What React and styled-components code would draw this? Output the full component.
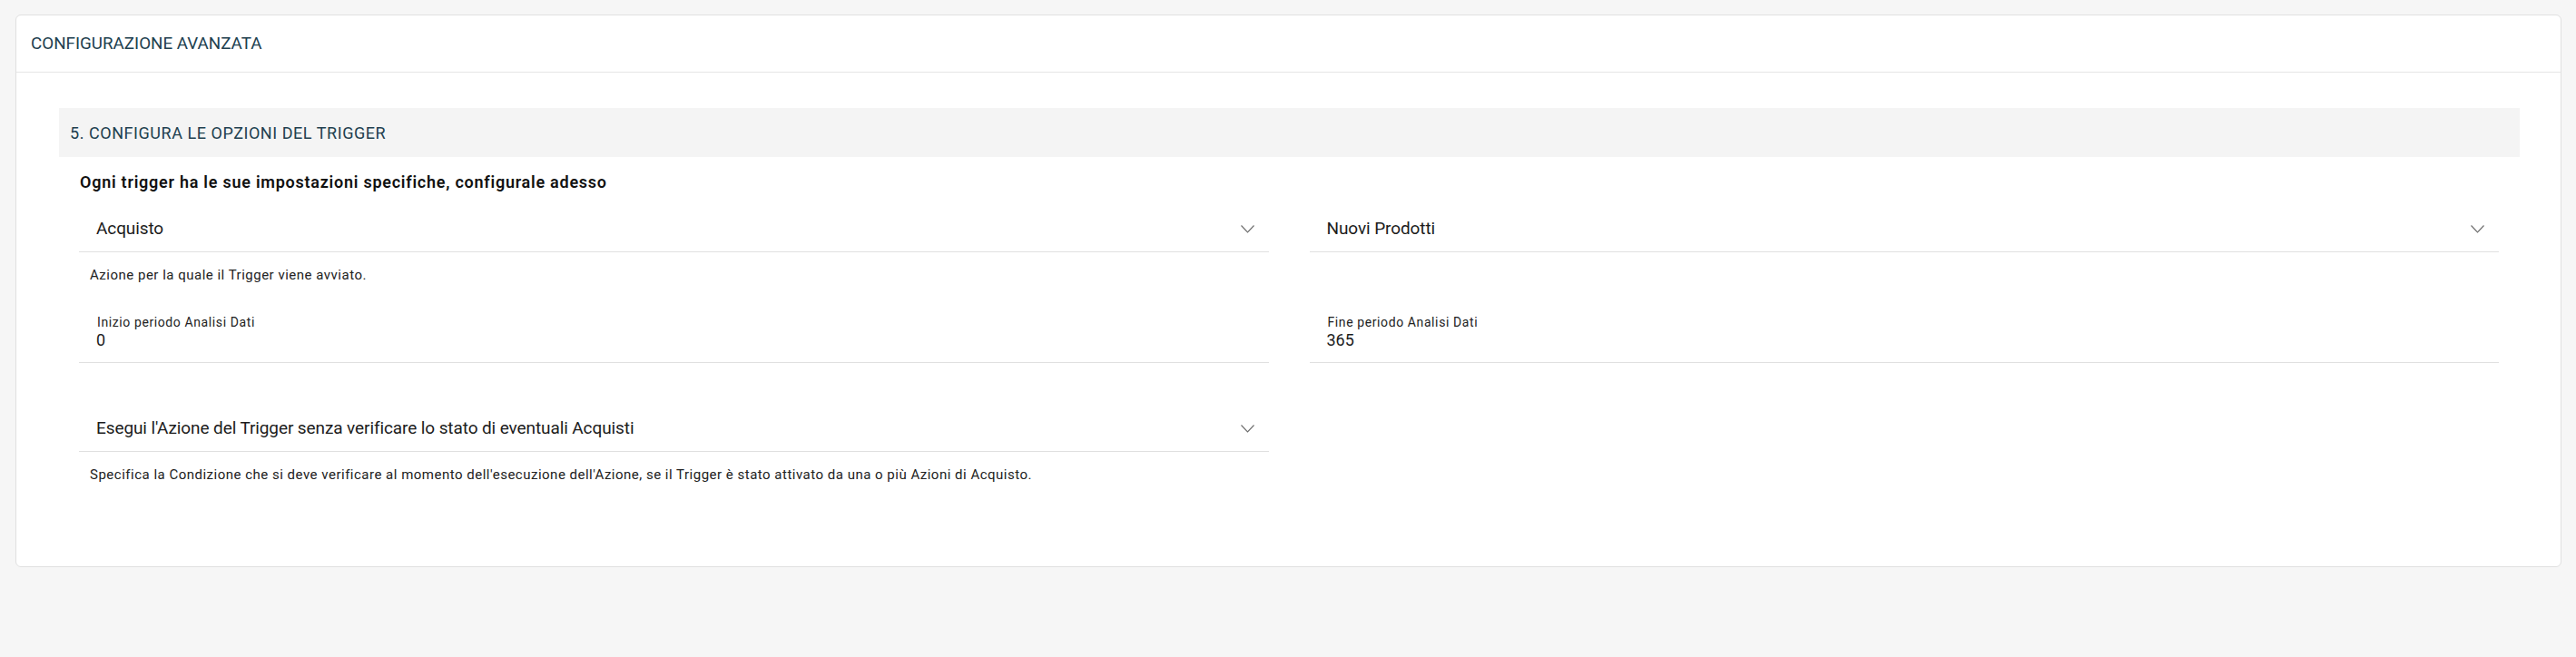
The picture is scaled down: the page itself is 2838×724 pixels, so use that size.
import React from "react";
import styled, { createGlobalStyle } from "styled-components";

const GlobalStyle = createGlobalStyle`
  html, body {
    margin: 0;
    padding: 0;
    background: #f6f6f6;
    font-family: Roboto, "Liberation Sans", Arial, sans-serif;
    color: #1c1c1c;
  }
  * { box-sizing: border-box; }
`;

const Page = styled.div`
  padding: 16px 16px 0 17px;
  min-height: 724px;
`;

const Card = styled.section`
  background: #ffffff;
  border: 1px solid #e0e0e0;
  border-radius: 6px;
`;

const CardHeader = styled.header`
  height: 63px;
  display: flex;
  align-items: center;
  padding: 0 16px;
  border-bottom: 1px solid #e6e6e6;
  font-size: 18.8px;
  letter-spacing: 0;
  text-transform: uppercase;
  color: #21404f;
`;

const CardBody = styled.div`
  padding: 39px 45px 91px 47px;
`;

const SectionBand = styled.div`
  height: 54px;
  display: flex;
  align-items: center;
  padding-left: 12px;
  background: #f4f4f4;
  font-size: 18px;
  letter-spacing: 0.55px;
  text-transform: uppercase;
  color: #21404f;
`;

const Content = styled.div`
  padding: 0 23px 0 22px;
`;

const Intro = styled.p`
  margin: 16px 0 0 1px;
  font-size: 18px;
  line-height: 24px;
  font-weight: 600;
  letter-spacing: 0.75px;
  color: #111;
`;

const Grid = styled.div`
  margin-top: 17px;
  display: grid;
  grid-template-columns: 1fr 1fr;
  column-gap: 45px;
  row-gap: 33px;
  align-items: start;
`;

const Field = styled.div`
  display: flex;
  flex-direction: column;
  margin-top: ${(p) => p.$offset || 0}px;
`;

const SelectBox = styled.div`
  height: 48px;
  display: flex;
  align-items: center;
  justify-content: space-between;
  padding: 10px 16px 13px 19px;
  border-bottom: 1px solid #e0e0e0;
  font-size: 19px;
  line-height: 24px;
  letter-spacing: -0.1px;
  color: #1c1c1c;
  cursor: pointer;
`;

const Helper = styled.div`
  margin-top: 15px;
  padding-left: 12px;
  font-size: 15px;
  line-height: 20px;
  letter-spacing: 0.5px;
  color: #222;
`;

const InputBox = styled.div`
  display: flex;
  flex-direction: column;
  padding: 0 16px 13px 19px;
  border-bottom: 1px solid #e0e0e0;
`;

const InputLabel = styled.label`
  padding-left: 1px;
  font-size: 14px;
  line-height: 18px;
  letter-spacing: 0.6px;
  color: #222;
`;

const InputValue = styled.div`
  font-size: 18px;
  line-height: 22px;
  color: #1c1c1c;
`;

const Chevron = () => (
  <svg width="15" height="9" viewBox="0 0 15 9" fill="none">
    <polyline points="0.5,0.5 7.5,8 14.5,0.5" stroke="#6b6b6b" strokeWidth="1.1" />
  </svg>
);

const Select = ({ value }) => (
  <SelectBox>
    <span>{value}</span>
    <Chevron />
  </SelectBox>
);

const Input = ({ label, value }) => (
  <InputBox>
    <InputLabel>{label}</InputLabel>
    <InputValue>{value}</InputValue>
  </InputBox>
);

export default function App() {
  return (
    <>
      <GlobalStyle />
      <Page>
        <Card>
          <CardHeader>Configurazione avanzata</CardHeader>
          <CardBody>
            <SectionBand>5. Configura le opzioni del trigger</SectionBand>
            <Content>
              <Intro>Ogni trigger ha le sue impostazioni specifiche, configurale adesso</Intro>
              <Grid>
                <Field>
                  <Select value="Acquisto" />
                  <Helper>Azione per la quale il Trigger viene avviato.</Helper>
                </Field>
                <Field>
                  <Select value="Nuovi Prodotti" />
                </Field>
                <Field>
                  <Input label="Inizio periodo Analisi Dati" value="0" />
                </Field>
                <Field>
                  <Input label="Fine periodo Analisi Dati" value="365" />
                </Field>
                <Field $offset={17}>
                  <Select value="Esegui l'Azione del Trigger senza verificare lo stato di eventuali Acquisti" />
                  <Helper>
                    Specifica la Condizione che si deve verificare al momento dell'esecuzione dell'Azione, se il Trigger è stato attivato da una o più Azioni di Acquisto.
                  </Helper>
                </Field>
              </Grid>
            </Content>
          </CardBody>
        </Card>
      </Page>
    </>
  );
}
